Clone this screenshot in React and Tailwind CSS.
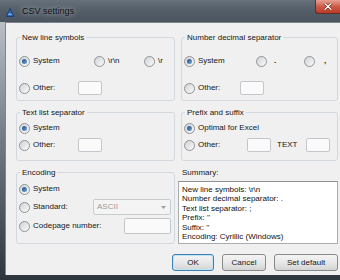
import React from "react";

function Radio({ checked }) {
  return (
    <span className="flex h-[11px] w-[11px] shrink-0 items-center justify-center rounded-full border border-[#8f9397] bg-gradient-to-br from-[#cfd2d5] to-[#fbfbfb]">
      {checked && (
        <span className="h-[5px] w-[5px] rounded-full bg-gradient-to-br from-[#1d4a82] to-[#78a9d9]" />
      )}
    </span>
  );
}

function RadioItem({ checked, label, className, labelClass }) {
  return (
    <div className={"flex h-[14px] items-center gap-[3px] " + (className || "")}>
      <Radio checked={checked} />
      <span className={labelClass || ""}>{label}</span>
    </div>
  );
}

function Box({ className }) {
  return (
    <div
      className={
        "h-[14px] rounded-[2px] border border-[#c3c7cb] bg-[#fafafa] " + (className || "")
      }
    />
  );
}

function Group({ title, children }) {
  return (
    <fieldset className="min-w-0 rounded-[3px] border border-[#d2d8dd] px-[2px]">
      <legend className="ml-[1px] px-[2px] leading-[11px]">{title}</legend>
      {children}
    </fieldset>
  );
}

function Button({ children, className }) {
  return (
    <div
      className={
        "flex h-[17px] items-center justify-center rounded-[3px] border bg-gradient-to-b from-[#f4f4f4] via-[#e8e8e8] to-[#d4d4d4] " +
        (className || "")
      }
    >
      {children}
    </div>
  );
}

export default function App() {
  return (
    <div className="flex h-[280px] w-[340px] flex-col overflow-hidden bg-gradient-to-b from-[#c7ccd1] via-[#727b84] to-[#2f353c] font-['Liberation_Sans',Arial,sans-serif] text-[8px] text-[#161616]">
      {/* Title bar */}
      <div className="flex h-[22px] shrink-0 items-start bg-gradient-to-b from-[#67717c] via-[#535d68] to-[#4b5560]">
        <div className="flex h-[22px] items-center gap-[8px] pl-[6px] pt-[2px]">
          <svg width="8" height="9" viewBox="0 0 8 9">
            <polygon points="4,0.5 7.6,8.5 0.4,8.5" fill="#2f6cc0" stroke="#10356e" strokeWidth="0.8" />
            <line x1="2.3" y1="6.2" x2="5.7" y2="6.2" stroke="#bcd6f5" strokeWidth="0.9" />
          </svg>
          <span className="text-[9px] text-[#111] [text-shadow:0_0_5px_rgba(235,240,245,0.8)]">
            CSV settings
          </span>
        </div>
        <div className="ml-auto flex h-[14px] w-[25px] items-center justify-center rounded-bl-[3px] border border-t-0 border-r-0 border-[#6b2a22] bg-gradient-to-b from-[#e6a094] via-[#cf5b47] to-[#b93a28]">
          <svg width="8" height="7" viewBox="0 0 8 7">
            <path d="M1 0.8 L7 6.2 M7 0.8 L1 6.2" stroke="#5a1810" strokeWidth="2.4" strokeLinecap="round" />
            <path d="M1 0.8 L7 6.2 M7 0.8 L1 6.2" stroke="#ffffff" strokeWidth="1.4" strokeLinecap="round" />
          </svg>
        </div>
      </div>

      {/* Client area */}
      <div className="ml-[5px] h-[253px] shrink-0 border-l border-t border-[#7d858d] bg-[#f0f0f0] pl-[10px] pr-[2px] pt-[9px]">
        <div className="grid grid-cols-[159px_157px] gap-x-[6px] gap-y-[6px]">
          {/* New line symbols */}
          <Group title="New line symbols">
            <div className="mt-[11px] flex">
              <RadioItem checked label="System" className="w-[75px]" />
              <RadioItem label="\r\n" className="w-[50px]" />
              <RadioItem label="\r" />
            </div>
            <div className="mb-[5px] mt-[13px] flex items-center">
              <RadioItem label="Other:" className="w-[59px]" />
              <Box className="w-[24px]" />
            </div>
          </Group>

          {/* Number decimal separator */}
          <Group title="Number decimal separator">
            <div className="mt-[11px] flex">
              <RadioItem checked label="System" className="w-[72px]" />
              <RadioItem label="." className="w-[48px]" labelClass="pl-[4px] font-bold" />
              <RadioItem label="," labelClass="pl-[6px] font-bold" />
            </div>
            <div className="mb-[5px] mt-[13px] flex items-center">
              <RadioItem label="Other:" className="w-[56px]" />
              <Box className="w-[24px]" />
            </div>
          </Group>

          {/* Text list separator */}
          <Group title="Text list separator">
            <RadioItem checked label="System" className="mt-[3px]" />
            <div className="mb-[8px] mt-[3px] flex items-center">
              <RadioItem label="Other:" className="w-[59px]" />
              <Box className="w-[24px]" />
            </div>
          </Group>

          {/* Prefix and suffix */}
          <Group title="Prefix and suffix">
            <RadioItem checked label="Optimal for Excel" className="mt-[3px]" />
            <div className="mb-[8px] mt-[3px] flex items-center">
              <RadioItem label="Other:" className="w-[63px]" />
              <Box className="w-[24px]" />
              <span className="ml-[6px] w-[29px]">TEXT</span>
              <Box className="w-[24px]" />
            </div>
          </Group>

          {/* Encoding */}
          <Group title="Encoding">
            <RadioItem checked label="System" className="mt-[3px] h-[16px]" />
            <div className="mt-[2px] flex h-[16px] items-center">
              <RadioItem label="Standard:" className="w-[74px]" />
              <div className="flex h-[16px] w-[78px] items-center justify-between rounded-[2px] border border-[#c9cccf] bg-[#f4f4f4] pl-[3px] pr-[4px] text-[#9a9a9a]">
                <span>ASCII</span>
                <svg width="5" height="3" viewBox="0 0 5 3">
                  <polygon points="0,0 5,0 2.5,3" fill="#a0a0a0" />
                </svg>
              </div>
            </div>
            <div className="mb-[9px] mt-[3px] flex h-[16px] items-center">
              <RadioItem label="Codepage number:" className="w-[105px]" />
              <Box className="h-[16px] w-[47px]" />
            </div>
          </Group>

          {/* Summary */}
          <div className="flex flex-col">
            <div className="pl-[1px] leading-[11px]">Summary:</div>
            <div className="-ml-[3px] mt-[3px] h-[63px] border border-[#a9adb2] border-t-[#8e9398] bg-white pl-[3px] pt-[3px] leading-[9.4px] text-[#111]">
              <div>New line symbols: \r\n</div>
              <div>Number decimal separator: .</div>
              <div>Text list separator: ;</div>
              <div>Prefix: ''</div>
              <div>Suffix: ''</div>
              <div>Encoding: Cyrillic (Windows)</div>
            </div>
          </div>
        </div>

        {/* Buttons */}
        <div className="mt-[10px] flex justify-end gap-[8px]">
          <Button className="w-[42px] border-[#3c7fb1] shadow-[inset_0_0_0_1px_#bfe3f7]">OK</Button>
          <Button className="w-[44px] border-[#8a8a8a]">Cancel</Button>
          <Button className="w-[64px] border-[#8a8a8a]">Set default</Button>
        </div>
      </div>
    </div>
  );
}
